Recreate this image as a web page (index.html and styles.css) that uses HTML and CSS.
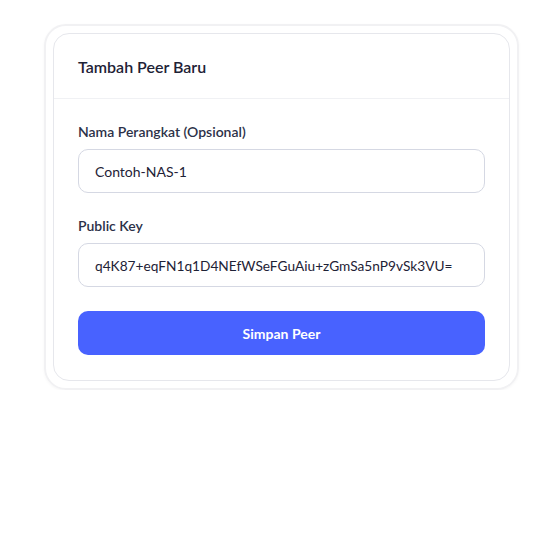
FILE: index.html
```html
<!DOCTYPE html>
<html lang="id">
<head>
<meta charset="utf-8">
<link rel="stylesheet" href="styles.css">
</head>
<body>
<div class="frame">
  <div class="card">
    <div class="card-header">Tambah Peer Baru</div>
    <div class="card-body">
      <div class="field">
        <label class="label">Nama Perangkat (Opsional)</label>
        <div class="input">Contoh-NAS-1</div>
      </div>
      <div class="field">
        <label class="label">Public Key</label>
        <div class="input input-key">q4K87+eqFN1q1D4NEfWSeFGuAiu+zGmSa5nP9vSk3VU=</div>
      </div>
      <button class="btn">Simpan Peer</button>
    </div>
  </div>
</div>
</body>
</html>
```
FILE: styles.css
```css
html, body { margin: 0; background: #ffffff; }
body {
  font-family: Lato, "Noto Sans", sans-serif;
  padding: 24px 18px 0 44px;
  color: #1e2236;
}
.frame {
  width: 475px;
  box-sizing: border-box;
  border: 2px solid #f1f1f3;
  border-radius: 22px;
  padding: 7px;
  box-shadow: 0 1px 3px rgba(0,0,0,0.04);
}
.card {
  border: 1px solid #e6e7ec;
  border-radius: 16px;
  background: #fff;
}
.card-header {
  padding: 0 24px;
  height: 64px;
  display: flex;
  align-items: center;
  font-size: 16px;
  font-weight: 600;
  color: #1e2236;
  border-bottom: 1px solid #f0f1f4;
}
.card-body {
  padding: 24px 24px 25px;
  display: flex;
  flex-direction: column;
  gap: 24px;
}
.field { display: flex; flex-direction: column; gap: 8px; }
.label {
  font-size: 14px;
  font-weight: 600;
  color: #2c3148;
  line-height: 18px;
}
.input {
  height: 44px;
  box-sizing: border-box;
  border: 1px solid #d5d8e3;
  border-radius: 10px;
  padding: 0 16px;
  display: flex;
  align-items: center;
  font-size: 14px;
  color: #1e2236;
}
.input-key { font-size: 13.7px; }
.btn {
  height: 44px;
  border: none;
  border-radius: 10px;
  background: #4862ff;
  color: #fff;
  font-family: inherit;
  font-size: 14px;
  font-weight: 700;
}
```
